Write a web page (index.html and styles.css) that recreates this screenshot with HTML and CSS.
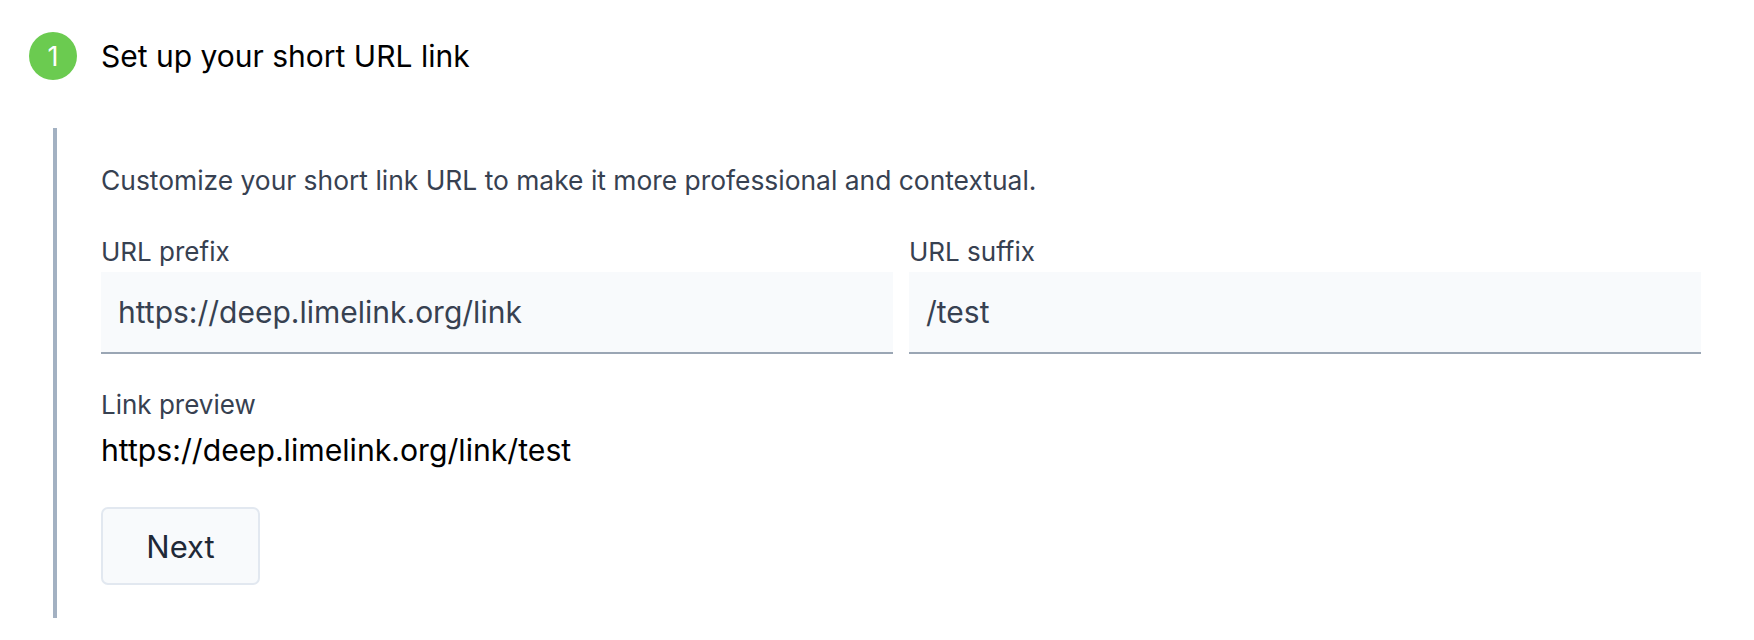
FILE: index.html
```html
<!DOCTYPE html>
<html lang="en">
<head>
<meta charset="utf-8">
<title>Set up your short URL link</title>
<link rel="stylesheet" href="styles.css">
</head>
<body>
  <div class="step">
    <div class="step-header">
      <div class="step-icon">1</div>
      <div class="step-title">Set up your short URL link</div>
    </div>
    <div class="step-body">
      <p class="desc">Customize your short link URL to make it more professional and contextual.</p>
      <div class="fields">
        <div class="field">
          <label class="label">URL prefix</label>
          <div class="input">https://deep.limelink.org/link</div>
        </div>
        <div class="field">
          <label class="label">URL suffix</label>
          <div class="input">/test</div>
        </div>
      </div>
      <div class="preview-label">Link preview</div>
      <div class="preview">https://deep.limelink.org/link/test</div>
      <button class="btn">Next</button>
    </div>
  </div>
</body>
</html>
```

FILE: styles.css
```css
html, body {
  margin: 0;
  padding: 0;
  background: #ffffff;
}
body {
  font-family: Inter, "Noto Sans", "Liberation Sans", sans-serif;
  color: #374151;
}
.step {
  width: 1754px;
}
.step-header {
  display: flex;
  align-items: center;
  gap: 24px;
  padding: 32px 0 0 29px;
  height: 48px;
}
.step-icon {
  width: 48px;
  height: 48px;
  border-radius: 50%;
  background: #6bcb50;
  color: #ffffff;
  display: flex;
  align-items: center;
  justify-content: center;
  font-size: 27px;
  flex: none;
}
.step-title {
  font-size: 30px;
  line-height: 36px;
  color: #000000;
}
.step-body {
  margin: 48px 0 0 53px;
  border-left: 4px solid #a3b1c2;
  padding: 36px 0 33px 44px;
  width: 1600px;
}
.desc {
  margin: 0;
  font-size: 26.4px;
  line-height: 32px;
  color: #374151;
}
.fields {
  display: grid;
  grid-template-columns: 1fr 1fr;
  gap: 16px;
  margin-top: 40px;
}
.field {
  display: flex;
  flex-direction: column;
  gap: 4px;
}
.label, .preview-label {
  font-size: 26px;
  line-height: 32px;
  color: #374151;
}
.input {
  height: 80px;
  border-bottom: 2px solid #9aa6b4;
  background: #f8fafc;
  display: flex;
  align-items: center;
  padding-left: 17px;
  font-size: 30px;
  color: #374151;
}
.preview-label {
  margin-top: 35px;
}
.preview {
  margin-top: 11px;
  font-size: 30.2px;
  line-height: 36px;
  color: #000000;
}
.btn {
  display: block;
  margin-top: 39px;
  width: 159px;
  height: 78px;
  border: 2px solid #e2e8f0;
  border-radius: 7px;
  background: #f8fafc;
  font-family: inherit;
  font-size: 31px;
  color: #1f2937;
  cursor: pointer;
}
```
